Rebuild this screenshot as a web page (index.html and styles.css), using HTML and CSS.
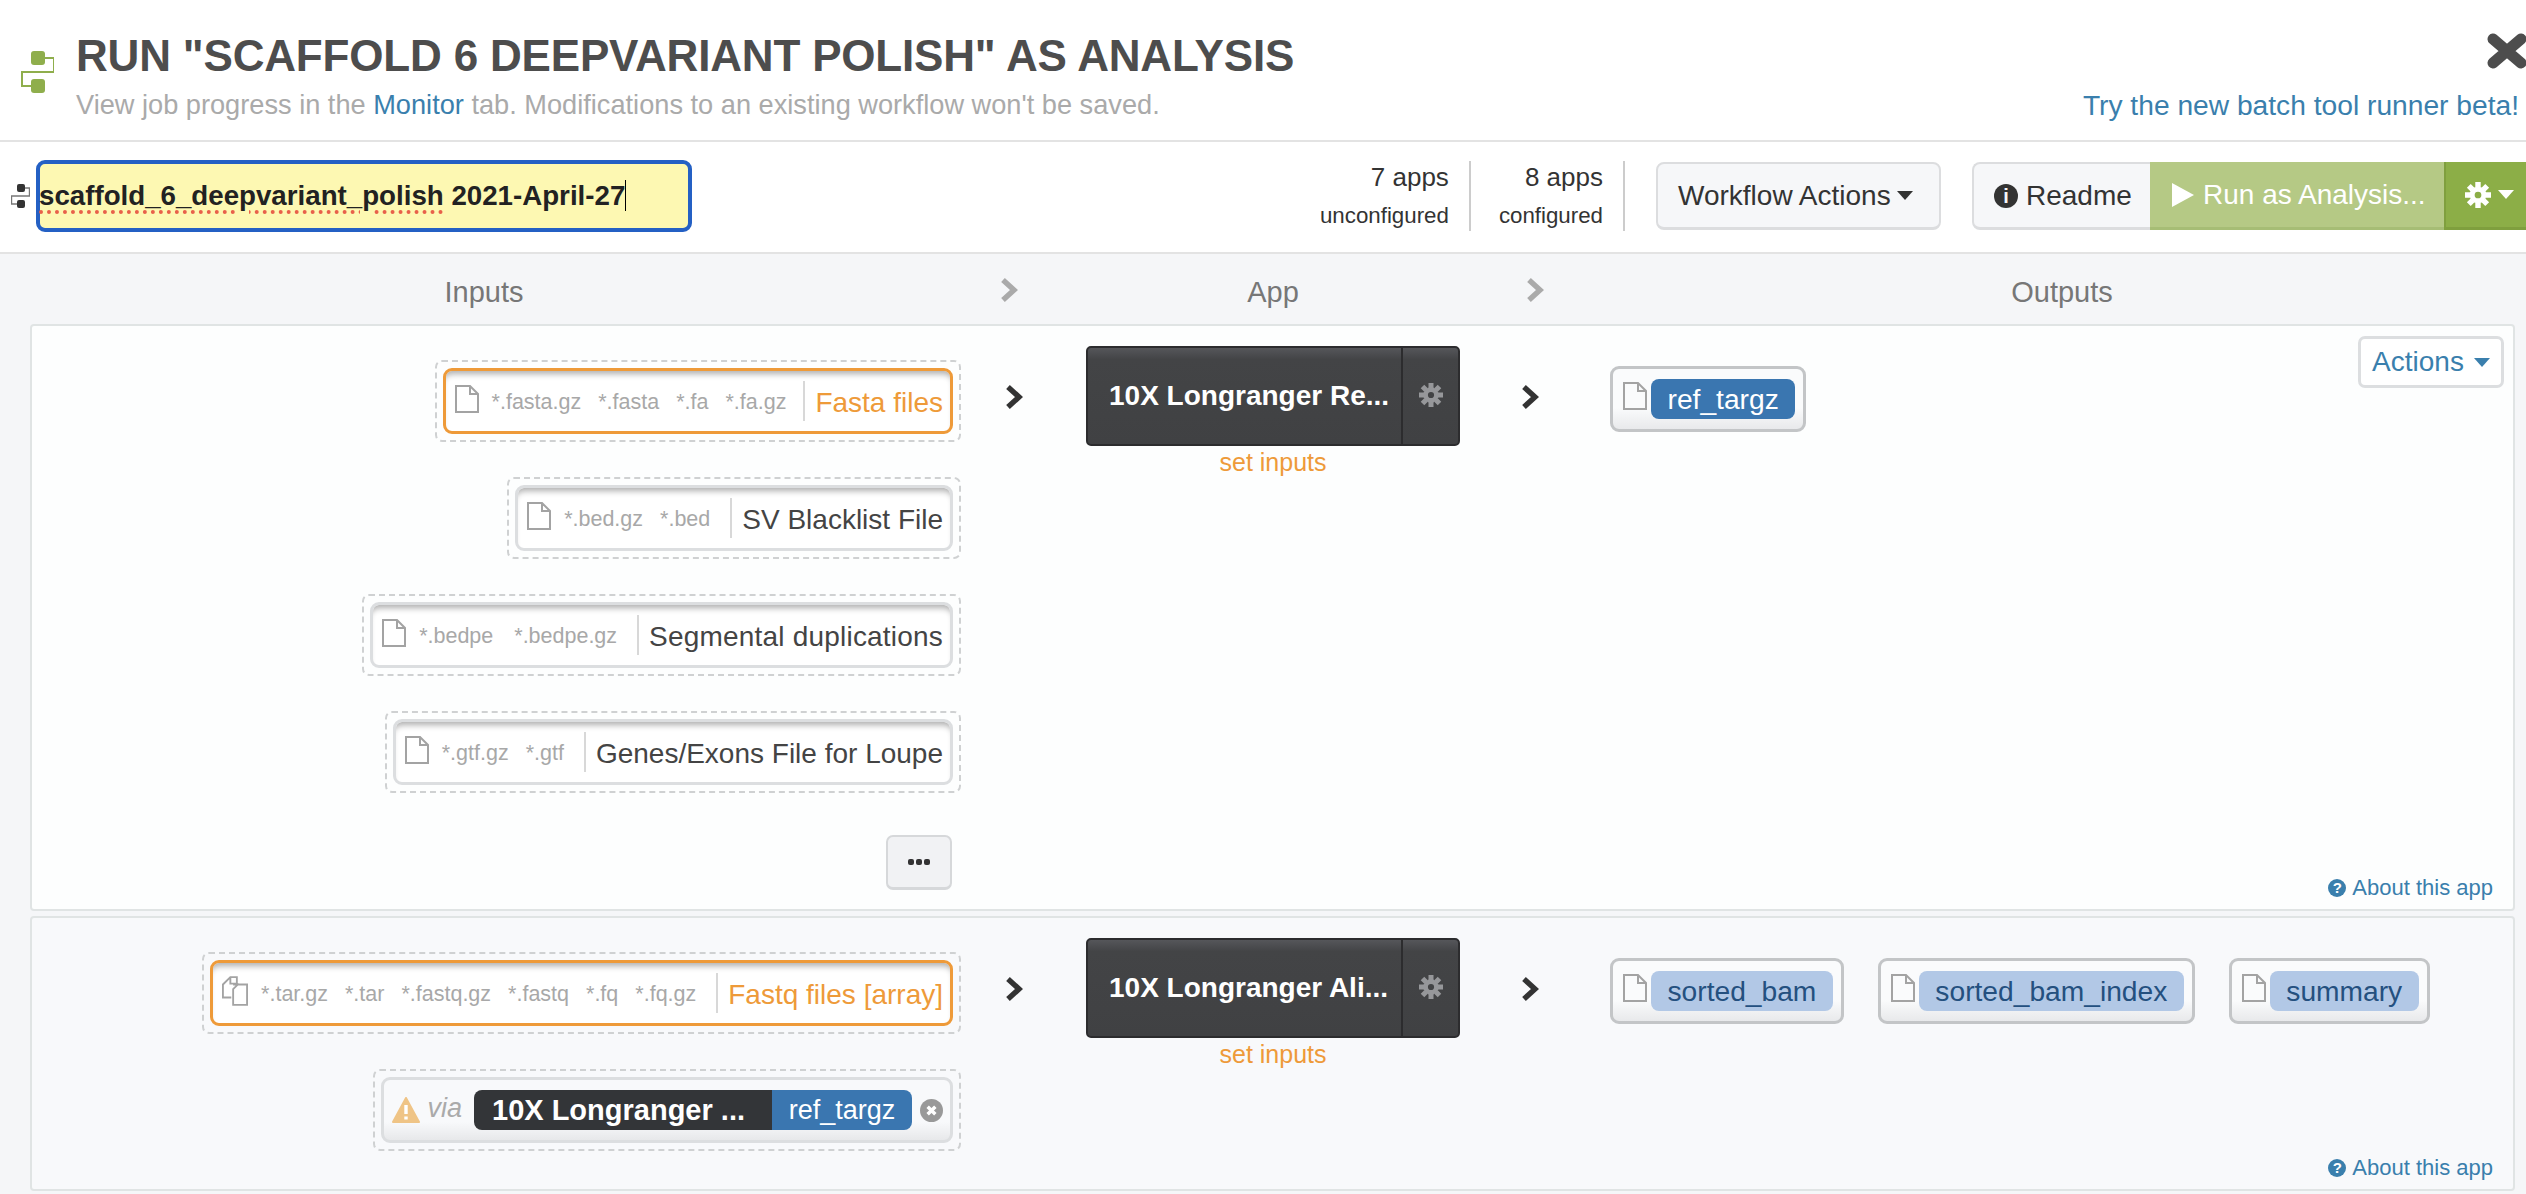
FILE: index.html
```html
<!DOCTYPE html>
<html lang="en">
<head>
<meta charset="utf-8">
<title>Run as Analysis</title>
<link rel="stylesheet" href="styles.css">
</head>
<body>
<svg class="defs" aria-hidden="true">
  <symbol id="file" viewBox="0 0 24 28"><path d="M1 1H15L23 9V27H1ZM15 1V9H23" fill="none" stroke="currentColor" stroke-width="2"/></symbol>
  <symbol id="files" viewBox="0 0 28 32"><path d="M1 20V9L9 1H16V8L9 8V1M10 23H1V20M12 9H19L27 9V31H12V14L18 8" fill="none" stroke="currentColor" stroke-width="2"/></symbol>
  <symbol id="cog" viewBox="-12 -12 24 24"><circle r="5.4" fill="none" stroke="currentColor" stroke-width="4.6"/><path d="M0-12V-7M0 12V7M-12 0H-7M12 0H7M-8.5-8.5L-5-5M8.5 8.5L5 5M-8.5 8.5L-5 5M8.5-8.5L5-5" stroke="currentColor" stroke-width="5"/></symbol>
  <symbol id="chev" viewBox="0 0 18 24"><path d="M3 2L14 12L3 22" fill="none" stroke="currentColor" stroke-width="5.4"/></symbol>
</svg>

<header class="head">
  <svg class="head-icon" viewBox="0 0 33 42"><path d="M24 7H33V21H1V35H10" fill="none" stroke="#8fae4c" stroke-width="2"/><rect x="10" width="14" height="14" rx="3" fill="#8fae4c"/><rect x="10" y="28" width="14" height="14" rx="3" fill="#8fae4c"/></svg>
  <div class="head-text">
    <h1 class="title">RUN "SCAFFOLD 6 DEEPVARIANT POLISH" AS ANALYSIS</h1>
    <p class="sub">View job progress in the <a class="link">Monitor</a> tab. Modifications to an existing workflow won't be saved.</p>
  </div>
  <div class="head-right">
    <svg class="close" viewBox="0 0 40 36"><path d="M6 6L34 30M34 6L6 30" stroke="#4d4d4d" stroke-width="11" stroke-linecap="round"/></svg>
    <a class="link beta">Try the new batch tool runner beta!</a>
  </div>
</header>

<div class="toolbar">
  <svg class="tool-icon" viewBox="0 0 19 24"><path d="M14 4H18.500V12H.5V20H6" fill="none" stroke="#777" stroke-width="1.400"/><rect x="6" width="8" height="8" rx="2" fill="#333"/><rect x="6" y="16" width="8" height="8" rx="2" fill="#333"/></svg>
  <div class="name-input"><span class="spell">scaffold_6_deepvariant_polish</span> <span class="caret-line">2021-April-27</span></div>
  <div class="stats">
    <div class="stat"><span class="stat-num">7 apps</span><span class="stat-lab">unconfigured</span></div>
    <div class="stat"><span class="stat-num">8 apps</span><span class="stat-lab">configured</span></div>
  </div>
  <button class="btn wf">Workflow Actions<i class="caret"></i></button>
  <div class="btn-group">
    <button class="btn readme"><span class="round-i">i</span>Readme</button>
    <button class="btn run"><i class="play"></i>Run as Analysis...</button>
    <button class="btn gear"><svg class="cog-w"><use href="#cog"/></svg><i class="caret white"></i></button>
  </div>
</div>

<main class="stage">
  <div class="cols">
    <div class="col-h">Inputs</div>
    <svg class="chev-h"><use href="#chev"/></svg>
    <div class="col-h">App</div>
    <svg class="chev-h"><use href="#chev"/></svg>
    <div class="col-h col-out">Outputs</div>
  </div>

  <section class="panel p-one">
    <div class="flow">
      <div class="inputs">
        <div class="dash"><div class="slot need tight">
          <svg class="fi"><use href="#file"/></svg>
          <span class="exts"><span>*.fasta.gz</span><span>*.fasta</span><span>*.fa</span><span>*.fa.gz</span></span>
          <span class="lab">Fasta files</span>
        </div></div>
        <div class="dash"><div class="slot">
          <svg class="fi"><use href="#file"/></svg>
          <span class="exts"><span>*.bed.gz</span><span>*.bed</span></span>
          <span class="lab">SV Blacklist File</span>
        </div></div>
        <div class="dash"><div class="slot wide">
          <svg class="fi"><use href="#file"/></svg>
          <span class="exts"><span>*.bedpe</span><span>*.bedpe.gz</span></span>
          <span class="lab">Segmental duplications</span>
        </div></div>
        <div class="dash"><div class="slot">
          <svg class="fi"><use href="#file"/></svg>
          <span class="exts"><span>*.gtf.gz</span><span>*.gtf</span></span>
          <span class="lab">Genes/Exons File for Loupe</span>
        </div></div>
        <button class="more"><i></i><i></i><i></i></button>
      </div>
      <svg class="chev a1"><use href="#chev"/></svg>
      <div class="app">
        <div class="app-box"><span class="app-name">10X Longranger Re...</span><span class="app-cog"><svg class="cog-g"><use href="#cog"/></svg></span></div>
        <a class="set">set inputs</a>
      </div>
      <svg class="chev a2"><use href="#chev"/></svg>
      <div class="outs">
        <div class="out"><svg class="fo"><use href="#file"/></svg><span class="pill">ref_targz</span></div>
        <button class="actions">Actions<i class="caret blue"></i></button>
      </div>
    </div>
    <a class="about"><span class="round-q">?</span>About this app</a>
  </section>

  <section class="panel p-two">
    <div class="flow">
      <div class="inputs">
        <div class="dash"><div class="slot need">
          <svg class="fi fs"><use href="#files"/></svg>
          <span class="exts"><span>*.tar.gz</span><span>*.tar</span><span>*.fastq.gz</span><span>*.fastq</span><span>*.fq</span><span>*.fq.gz</span></span>
          <span class="lab">Fastq files [array]</span>
        </div></div>
        <div class="dash"><div class="slot via-slot">
          <svg class="warn" viewBox="0 0 28 26"><path d="M14 1L27 25H1Z" fill="#efc486" stroke="#efc486" stroke-width="2" stroke-linejoin="round"/><path d="M14 8V17M14 19.500V22.500" stroke="#fff" stroke-width="3.400"/></svg>
          <span class="via">via</span>
          <span class="link-pill"><span class="lp-app">10X Longranger ...</span><span class="lp-out">ref_targz</span></span>
          <span class="x-round"><svg viewBox="0 0 24 24"><path d="M8 8L16 16M16 8L8 16" stroke="#fff" stroke-width="3.600"/></svg></span>
        </div></div>
      </div>
      <svg class="chev a1"><use href="#chev"/></svg>
      <div class="app">
        <div class="app-box"><span class="app-name">10X Longranger Ali...</span><span class="app-cog"><svg class="cog-g"><use href="#cog"/></svg></span></div>
        <a class="set">set inputs</a>
      </div>
      <svg class="chev a2"><use href="#chev"/></svg>
      <div class="outs">
        <div class="out"><svg class="fo"><use href="#file"/></svg><span class="pill light">sorted_bam</span></div>
        <div class="out"><svg class="fo"><use href="#file"/></svg><span class="pill light">sorted_bam_index</span></div>
        <div class="out"><svg class="fo"><use href="#file"/></svg><span class="pill light">summary</span></div>
      </div>
    </div>
    <a class="about"><span class="round-q">?</span>About this app</a>
  </section>
</main>
</body>
</html>
```

FILE: styles.css
```css
* { box-sizing: border-box; }
html, body { margin: 0; padding: 0; }
body {
  width: 2526px;
  height: 1194px;
  overflow: hidden;
  background: #fff;
  color: #333;
  font-family: "Liberation Sans", Arial, sans-serif;
  font-size: 28px;
}
.defs { position: absolute; width: 0; height: 0; }
.link { color: #3a7fad; }
button { font-family: inherit; margin: 0; }

/* header */
.head {
  height: 142px;
  border-bottom: 2px solid #e3e3e3;
  display: flex;
  padding: 31px 7px 0 21px;
}
.head-icon { width: 33px; height: 42px; margin: 20px 22px 0 0; flex: none; }
.head-text { flex: 1; }
.title {
  margin: 0;
  font-size: 44px;
  line-height: 50px;
  font-weight: 700;
  letter-spacing: -.18px;
  color: #4d4d4d;
}
.sub {
  margin: 7px 0 0;
  font-size: 27.2px;
  line-height: 34px;
  color: #aaa;
}
.head-right { display: flex; flex-direction: column; align-items: flex-end; }
.close { width: 40px; height: 36px; margin: 2px -8px 19px 0; flex: none; }
.beta { font-size: 28.2px; line-height: 34px; }

/* toolbar */
.toolbar {
  height: 112px;
  border-bottom: 2px solid #e3e3e3;
  display: flex;
  align-items: center;
  padding: 0 0 2px 11px;
}
.tool-icon { width: 19px; height: 24px; margin-right: 6px; flex: none; }
.name-input {
  width: 656px;
  height: 72px;
  border: 4px solid #2460c4;
  border-radius: 9px;
  background: #fdf8b2;
  font-size: 27.7px;
  font-weight: 700;
  line-height: 64px;
  color: #222;
  text-indent: -1px;
  white-space: nowrap;
}
.spell { text-decoration: underline dotted #e8604a 4px; text-underline-offset: 5px; }
.caret-line { border-right: 1px solid #000; }
.stats { display: flex; margin-left: auto; }
.stat {
  height: 70px;
  padding: 0 20px 0 28px;
  border-right: 2px solid #ccc;
  display: flex;
  flex-direction: column;
  align-items: flex-end;
}
.stat-num { font-size: 26px; line-height: 32px; }
.stat-lab { font-size: 22.3px; line-height: 30px; margin-top: 8px; }
.btn {
  height: 68px;
  font-size: 28px;
  color: #333;
  background: #f6f7f9;
  border: 2px solid #dcdddf;
  border-bottom-width: 3px;
  display: flex;
  align-items: center;
  white-space: nowrap;
}
.wf {
  width: 285px;
  margin: 0 31px 0 31px;
  border-radius: 8px;
  padding: 0 0 0 20px;
}
.caret {
  display: inline-block;
  width: 0;
  height: 0;
  margin-left: 6px;
  border-left: 8px solid transparent;
  border-right: 8px solid transparent;
  border-top: 9px solid #333;
}
.caret.white { border-top-color: #fff; margin-left: 7px; }
.caret.blue { border-top-color: #3a7fad; margin-left: 10px; }
.btn-group { display: flex; }
.readme {
  width: 178px;
  border-right: 0;
  border-radius: 8px 0 0 8px;
  padding: 0 0 0 20px;
}
.round-i {
  width: 24px;
  height: 24px;
  border-radius: 50%;
  background: #333;
  color: #f6f7f9;
  font-size: 20px;
  font-weight: 700;
  line-height: 24px;
  text-align: center;
  margin-right: 8px;
  flex: none;
}
.run {
  width: 294px;
  background: #b5c985;
  border: 0;
  border-bottom: 3px solid #a6bd75;
  color: #fff;
  padding: 0 0 0 22px;
}
.play {
  width: 0;
  height: 0;
  border-left: 22px solid #fff;
  border-top: 12px solid transparent;
  border-bottom: 12px solid transparent;
  margin-right: 9px;
}
.gear {
  width: 82px;
  background: #8cae47;
  border: 0;
  border-left: 2px solid #7f9f3e;
  border-bottom: 3px solid #7f9f3e;
  padding: 0 0 0 19px;
}
.cog-w { width: 26px; height: 26px; color: #fff; flex: none; }

/* stage */
.stage { height: 940px; background: #f5f6f8; padding-bottom: 4px; }
.cols {
  height: 70px;
  display: grid;
  grid-template-columns: 968px 82px 446px 78px 1fr;
  align-items: center;
  justify-items: center;
}
.col-h { color: #777; font-size: 29px; line-height: 76px; height: 70px; }
.col-out { padding-left: 24px; width: 100%; text-align: center; }
.chev-h { width: 18px; height: 24px; color: #aaa; margin-top: 1px; }

.panel {
  width: 2485px;
  margin: 0 0 5px 30px;
  border: 2px solid #e0e4e4;
  border-radius: 4px;
  display: flex;
  flex-direction: column;
}
.p-one { height: 587px; background: #fdfefe; }
.p-two { height: 275px; background: #f8f9fb; margin-bottom: 0; }
.flow {
  flex: 1;
  min-height: 0;
  display: grid;
  grid-template-columns: 929px 125px 374px 150px 1fr;
  align-items: start;
}
.inputs {
  display: flex;
  flex-direction: column;
  align-items: flex-end;
  gap: 35px;
  padding-top: 34px;
}
.dash {
  height: 82px;
  padding: 6px;
  border: 2px dashed #cfd1d2;
  border-radius: 7px;
}
.slot {
  height: 66px;
  display: flex;
  align-items: center;
  padding: 0 7px 0 9px;
  background: #fff;
  border: 3px solid #dcdee0;
  border-radius: 9px;
  box-shadow: inset 0 7px 6px -4px rgba(0, 0, 0, .32);
}
.slot.need { border-color: #ee9a39; }
.slot.need .lab { color: #ee9a39; }
.fi { width: 24px; height: 28px; color: #a3a3a3; flex: none; margin: -4px 13px 0 0; }
.fs { width: 26px; height: 30px; }
.exts {
  display: flex;
  gap: 17px;
  font-size: 21.5px;
  color: #a8a8a8;
  margin: 2px 20px 0 0;
}
.tight .exts { margin-right: 17px; }
.wide .exts { gap: 21px; }
.wide .lab { letter-spacing: .2px; }
.lab {
  border-left: 2px solid #d8d8d8;
  padding-left: 10px;
  height: 40px;
  line-height: 44px;
  color: #444;
  white-space: nowrap;
}
.via-slot {
  padding: 0 7px 0 8px;
  background: linear-gradient(#f8f9fb 70%, #e7e8ea);
  box-shadow: none;
}
.warn { width: 28px; height: 26px; flex: none; margin-right: 7px; }
.via { font-style: italic; font-size: 27px; color: #aaa; margin: -4px 12px 0 0; }
.link-pill {
  display: flex;
  height: 40px;
  line-height: 40px;
  border-radius: 8px;
  overflow: hidden;
  font-size: 27px;
  white-space: nowrap;
}
.lp-app { width: 298px; background: #333538; color: #fff; font-weight: 700; padding-left: 18px; font-size: 29px; }
.lp-out { width: 140px; background: #3a76b0; color: #fff; text-align: center; }
.x-round {
  width: 23px;
  height: 23px;
  border-radius: 50%;
  background: #999;
  margin-left: 8px;
  flex: none;
}
.x-round svg { display: block; width: 23px; height: 23px; }
.more {
  width: 66px;
  height: 55px;
  margin: 7px 9px 0 0;
  background: #f1f2f4;
  border: 2px solid #d6d8da;
  border-bottom-width: 3px;
  border-radius: 7px;
  display: flex;
  align-items: center;
  justify-content: center;
  gap: 2px;
  padding: 0;
}
.more i { width: 6px; height: 6px; border-radius: 2px; background: #333; }

.chev { width: 18px; height: 24px; color: #333; margin-top: 59px; }
.a1 { margin-left: 44px; }
.a2 { margin-left: 61px; }
.app { display: flex; flex-direction: column; align-items: center; padding-top: 20px; }
.app-box {
  width: 100%;
  height: 100px;
  display: flex;
  border-radius: 5px;
  border: 2px solid #2c2c2e;
  background: linear-gradient(#55565a, #434446 12%, #404143);
  color: #fff;
}
.app-name {
  flex: 1;
  font-size: 28px;
  font-weight: 700;
  line-height: 96px;
  padding-left: 21px;
  white-space: nowrap;
}
.app-cog {
  width: 57px;
  border-left: 2px solid #2c2c2e;
  display: flex;
  align-items: center;
  justify-content: center;
  padding-bottom: 2px;
}
.cog-g { width: 24px; height: 24px; color: #96979a; }
.set { font-size: 25px; line-height: 28px; color: #ee9a39; margin-top: 2px; }

.outs {
  display: flex;
  align-items: flex-start;
  gap: 34px;
  padding: 40px 11px 0 0;
  position: relative;
}
.out {
  height: 66px;
  display: flex;
  align-items: center;
  padding: 0 8px 0 10px;
  border: 3px solid #c3c5c7;
  border-radius: 9px;
  background: linear-gradient(#fafbfc 65%, #e8e9eb);
}
.fo { width: 24px; height: 28px; color: #a3a3a3; flex: none; margin: -6px 4px 0 0; }
.pill {
  height: 40px;
  line-height: 40px;
  padding: 0 16.5px;
  border-radius: 8px;
  background: #3a76b0;
  color: #fff;
  font-size: 28.2px;
}
.pill.light { background: #b2c8e6; color: #24507f; }
.actions {
  position: absolute;
  top: 10px;
  right: 9px;
  height: 52px;
  width: 146px;
  background: #fff;
  border: 3px solid #dcdee0;
  border-radius: 7px;
  color: #3a7fad;
  font-size: 28px;
  padding: 0;
  display: flex;
  align-items: center;
  justify-content: center;
}
.about {
  align-self: flex-end;
  margin: 0 20px 7px 0;
  font-size: 22px;
  line-height: 28px;
  color: #3a7fad;
  display: flex;
  align-items: center;
}
.round-q {
  width: 18px;
  height: 18px;
  border-radius: 50%;
  background: #3a7fad;
  color: #fff;
  font-size: 15px;
  font-weight: 700;
  line-height: 18px;
  text-align: center;
  margin-right: 6px;
}
```
